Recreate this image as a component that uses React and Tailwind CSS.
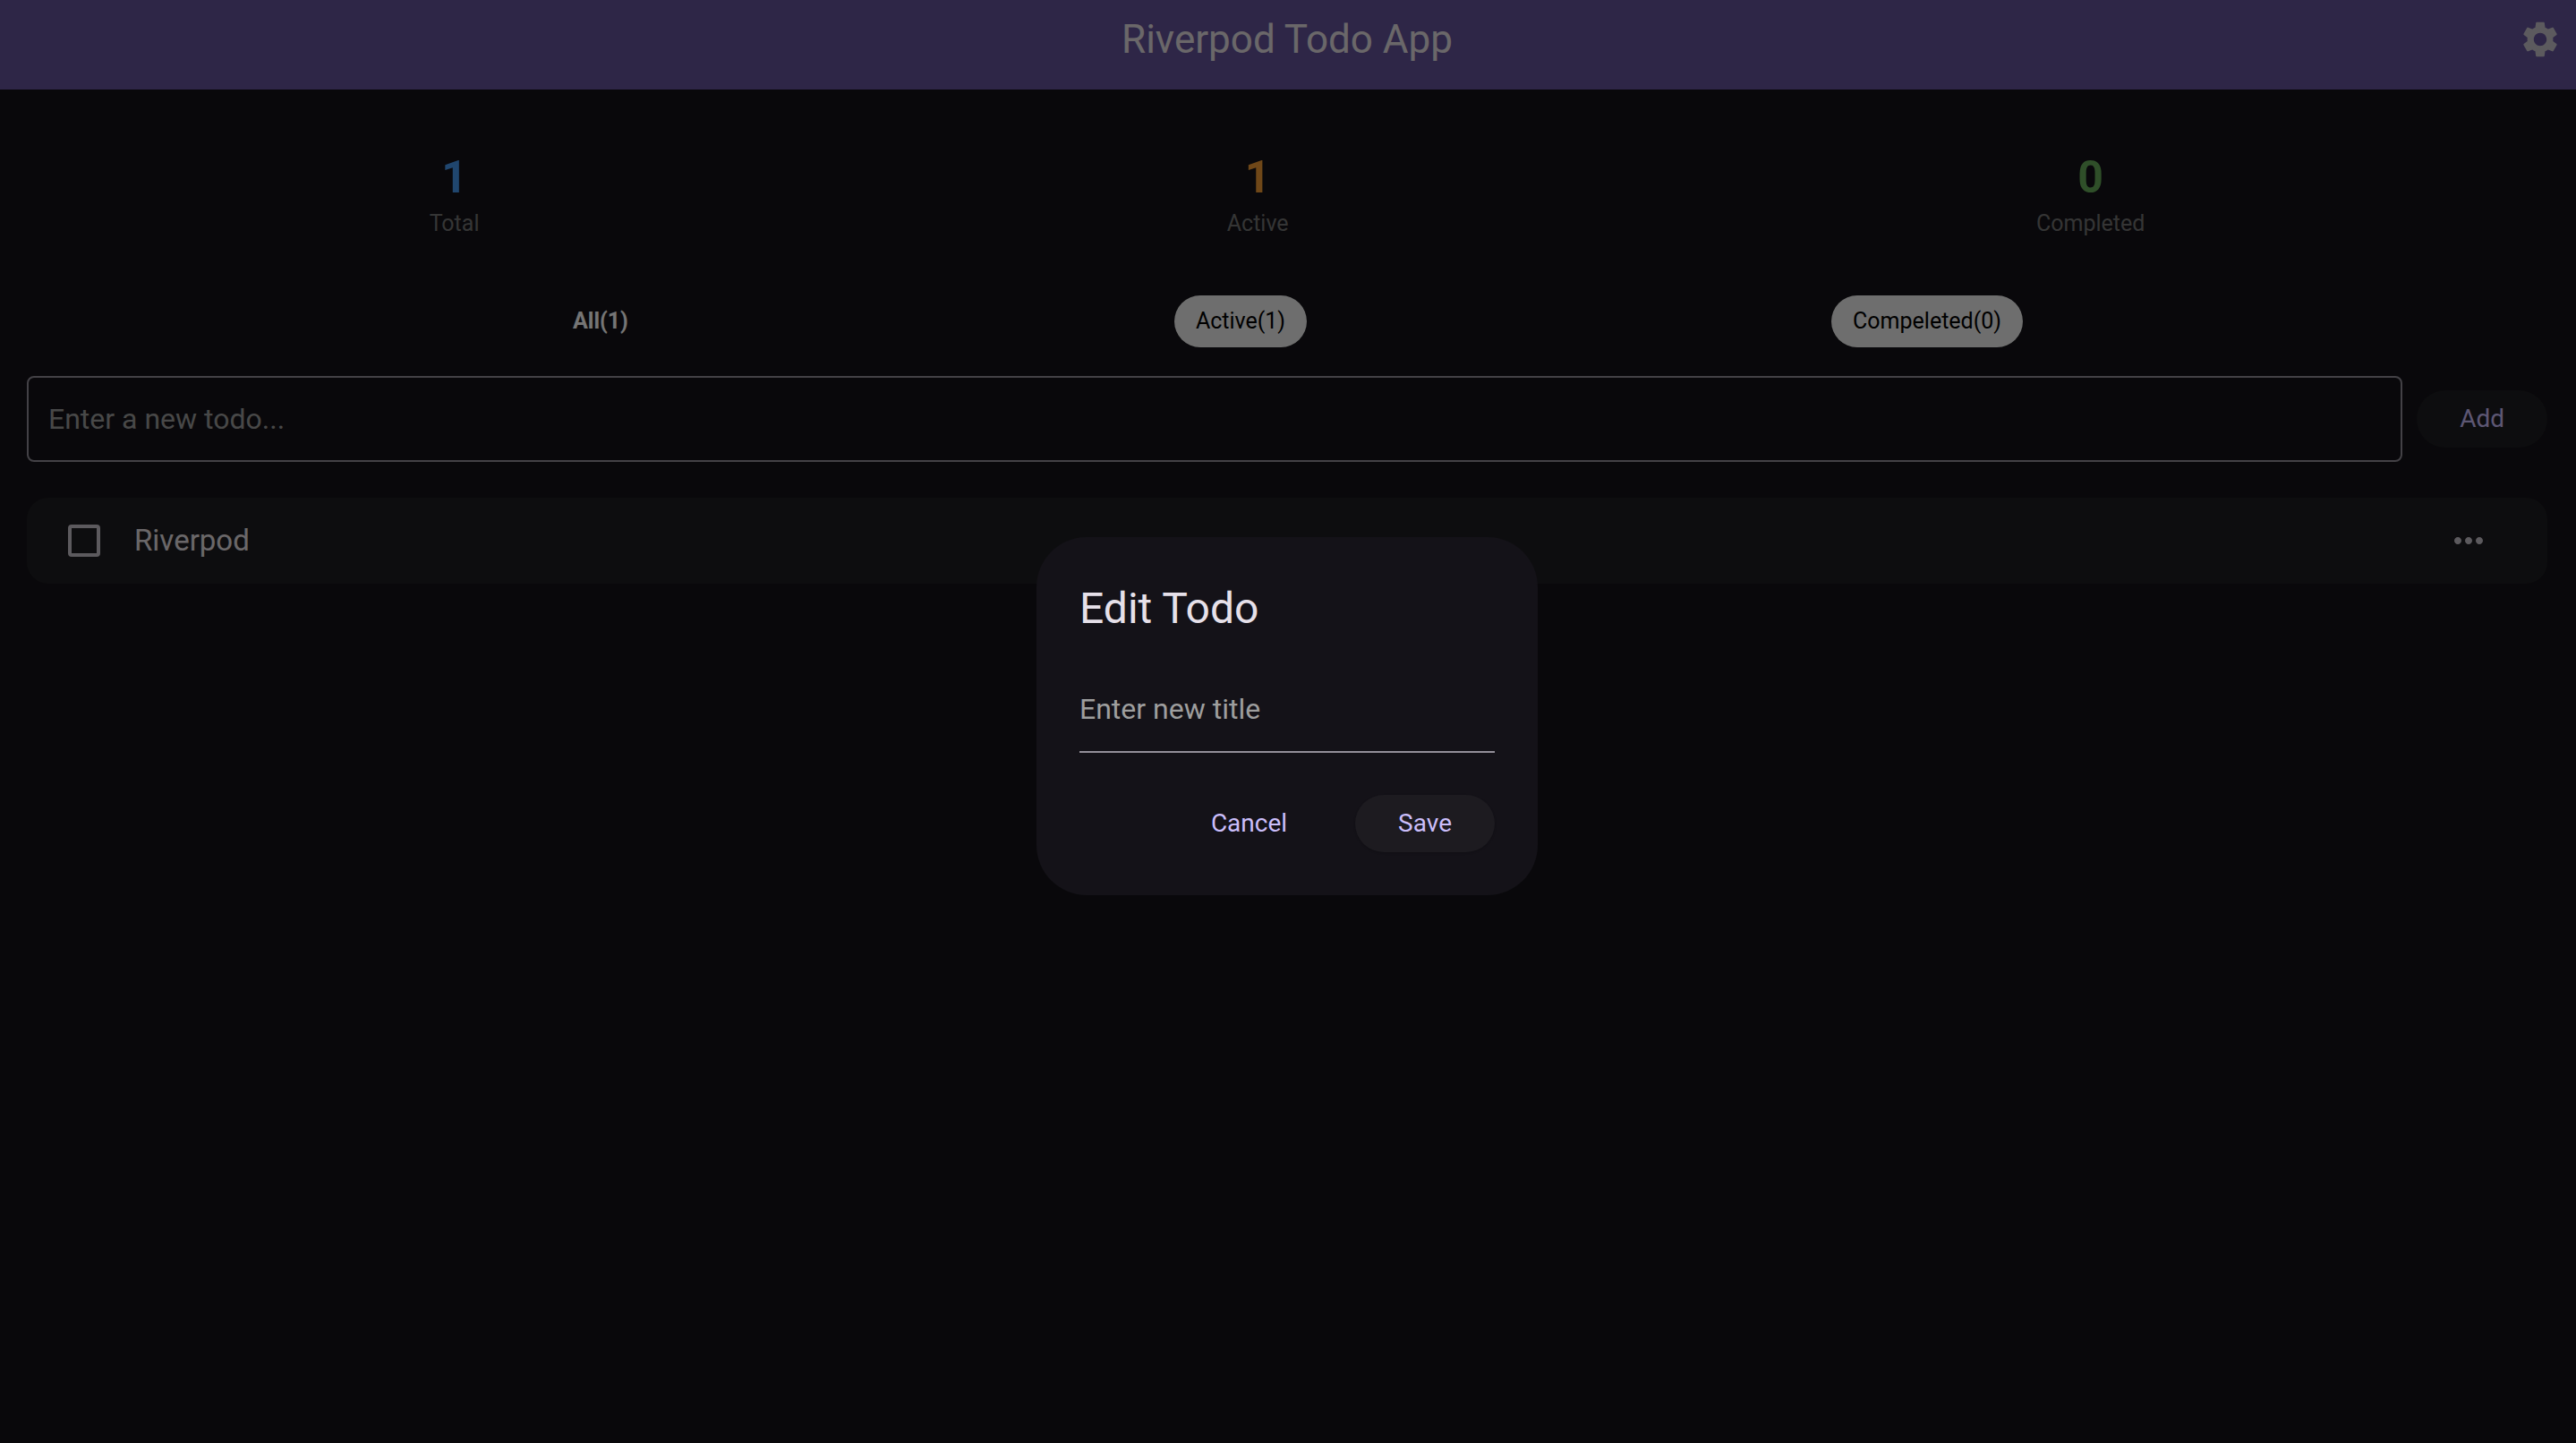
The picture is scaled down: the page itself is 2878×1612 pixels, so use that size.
import { useState } from "react";
import { MdSettings, MdMoreHoriz } from "react-icons/md";

const stats = [
  { value: 1, label: "Total", color: "text-[#4698f0]" },
  { value: 1, label: "Active", color: "text-[#f29b35]" },
  { value: 0, label: "Completed", color: "text-[#67ad5b]" },
];

const filters = [
  { id: "all", label: "All(1)" },
  { id: "active", label: "Active(1)" },
  { id: "completed", label: "Compeleted(0)" },
];

function Header() {
  return (
    <header className="grid h-[100px] grid-cols-[1fr_auto_1fr] items-center bg-[#64539c] pr-4 pb-3 pl-3.5 text-white">
      <h1 className="col-start-2 text-[44px] leading-[56px] text-[#e6e1e5]">Riverpod Todo App</h1>
      <button type="button" aria-label="Settings" className="justify-self-end text-[#c9c5cd]">
        <MdSettings size={48} />
      </button>
    </header>
  );
}

function Stats() {
  return (
    <section className="flex justify-around px-8">
      {stats.map((s) => (
        <div key={s.label} className="flex flex-col items-center">
          <span className={`text-[50px] leading-[60px] font-bold ${s.color}`}>{s.value}</span>
          <span className="mt-1 text-[25px] leading-[36px] text-[#757575]">{s.label}</span>
        </div>
      ))}
    </section>
  );
}

function Filters({ current, onChange }) {
  return (
    <nav className="mt-[62px] flex justify-evenly">
      {filters.map((f) => (
        <button
          key={f.id}
          type="button"
          onClick={() => onChange(f.id)}
          className={
            current === f.id
              ? "h-[58px] rounded-full px-6 text-[25px] font-bold text-white"
              : "h-[58px] rounded-full bg-[#f0f0f0] px-6 text-[25px] text-black"
          }
        >
          {f.label}
        </button>
      ))}
    </nav>
  );
}

function EditDialog() {
  return (
    <div className="fixed inset-0 flex items-center justify-center bg-black/54 pr-0.5 pb-3">
      <form
        role="dialog"
        aria-labelledby="edit-title"
        onSubmit={(e) => e.preventDefault()}
        className="w-[560px] rounded-[56px] bg-[#141218] p-12"
      >
        <h2 id="edit-title" className="text-[48px] leading-[64px] text-[#e6e0e9]">
          Edit Todo
        </h2>
        <input
          type="text"
          aria-label="New title"
          placeholder="Enter new title"
          className="mt-8 block h-[97px] w-full border-b-2 border-[#938f99] bg-transparent text-[32px] text-[#e6e0e9] outline-none placeholder:text-[#9e9e9e]"
        />
        <div className="mt-[47px] flex justify-end gap-[52px]">
          <button type="button" className="h-16 px-6 text-[28px] text-[#cbbefa]">
            Cancel
          </button>
          <button
            type="submit"
            className="h-16 rounded-full bg-[#1d1b20] px-12 text-[28px] text-[#cbbefa] shadow-sm"
          >
            Save
          </button>
        </div>
      </form>
    </div>
  );
}

export default function App() {
  const [filter, setFilter] = useState("all");
  return (
    <div className="min-h-screen bg-[#141318] font-[Roboto,sans-serif]">
      <Header />
      <main className="pt-[68px] pr-8 pl-[30px]">
        <Stats />
        <Filters current={filter} onChange={setFilter} />
        <form className="mt-8 flex items-center gap-4" onSubmit={(e) => e.preventDefault()}>
          <input
            type="text"
            aria-label="New todo"
            placeholder="Enter a new todo..."
            className="h-24 min-w-0 flex-1 rounded-lg border-2 border-[#938f99] bg-transparent px-[22px] text-[32px] text-white outline-none placeholder:text-[#9e9e9e]"
          />
          <button type="submit" className="h-16 rounded-full bg-[#1e1d21] px-12 text-[28px] text-[#cbbefa]">
            Add
          </button>
        </form>
        <ul className="mt-10">
          <li className="flex h-24 items-center rounded-3xl bg-[#1e1d21] pr-16 pl-[46px]">
            <label className="flex items-center gap-[38px] text-[33px] text-[#e6e1e5]">
              <input type="checkbox" className="size-9 appearance-none rounded border-4 border-[#c9c5cd]" />
              Riverpod
            </label>
            <button type="button" aria-label="Todo options" className="ml-auto text-[#c9c5cd]">
              <MdMoreHoriz size={48} />
            </button>
          </li>
        </ul>
      </main>
      <EditDialog />
    </div>
  );
}
